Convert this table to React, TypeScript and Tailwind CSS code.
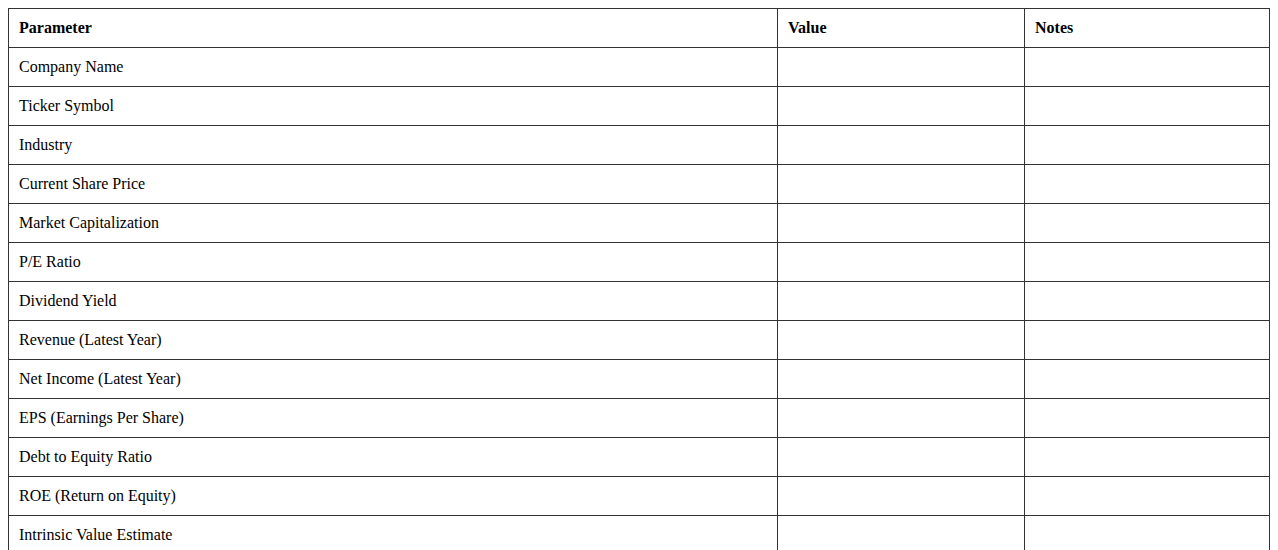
const rows = [
  "Company Name",
  "Ticker Symbol",
  "Industry",
  "Current Share Price",
  "Market Capitalization",
  "P/E Ratio",
  "Dividend Yield",
  "Revenue (Latest Year)",
  "Net Income (Latest Year)",
  "EPS (Earnings Per Share)",
  "Debt to Equity Ratio",
  "ROE (Return on Equity)",
  "Intrinsic Value Estimate",
];

const App = () => {
  return (
    <div className="p-2 bg-white text-black font-['Liberation_Serif','Times_New_Roman',serif] text-base">
      <table className="w-full border-collapse border border-[#333] table-fixed">
        <colgroup>
          <col className="w-[769px]" />
          <col className="w-[247px]" />
          <col />
        </colgroup>
        <thead>
          <tr>
            <th className="border border-[#333] px-2.5 py-2.5 text-left font-bold leading-[18px]">Parameter</th>
            <th className="border border-[#333] px-2.5 py-2.5 text-left font-bold leading-[18px]">Value</th>
            <th className="border border-[#333] px-2.5 py-2.5 text-left font-bold leading-[18px]">Notes</th>
          </tr>
        </thead>
        <tbody>
          {rows.map((r) => (
            <tr key={r}>
              <td className="border border-[#333] px-2.5 py-2.5 leading-[18px]">{r}</td>
              <td className="border border-[#333] px-2.5 py-2.5 leading-[18px]"></td>
              <td className="border border-[#333] px-2.5 py-2.5 leading-[18px]"></td>
            </tr>
          ))}
        </tbody>
      </table>
    </div>
  );
};

export default App;
